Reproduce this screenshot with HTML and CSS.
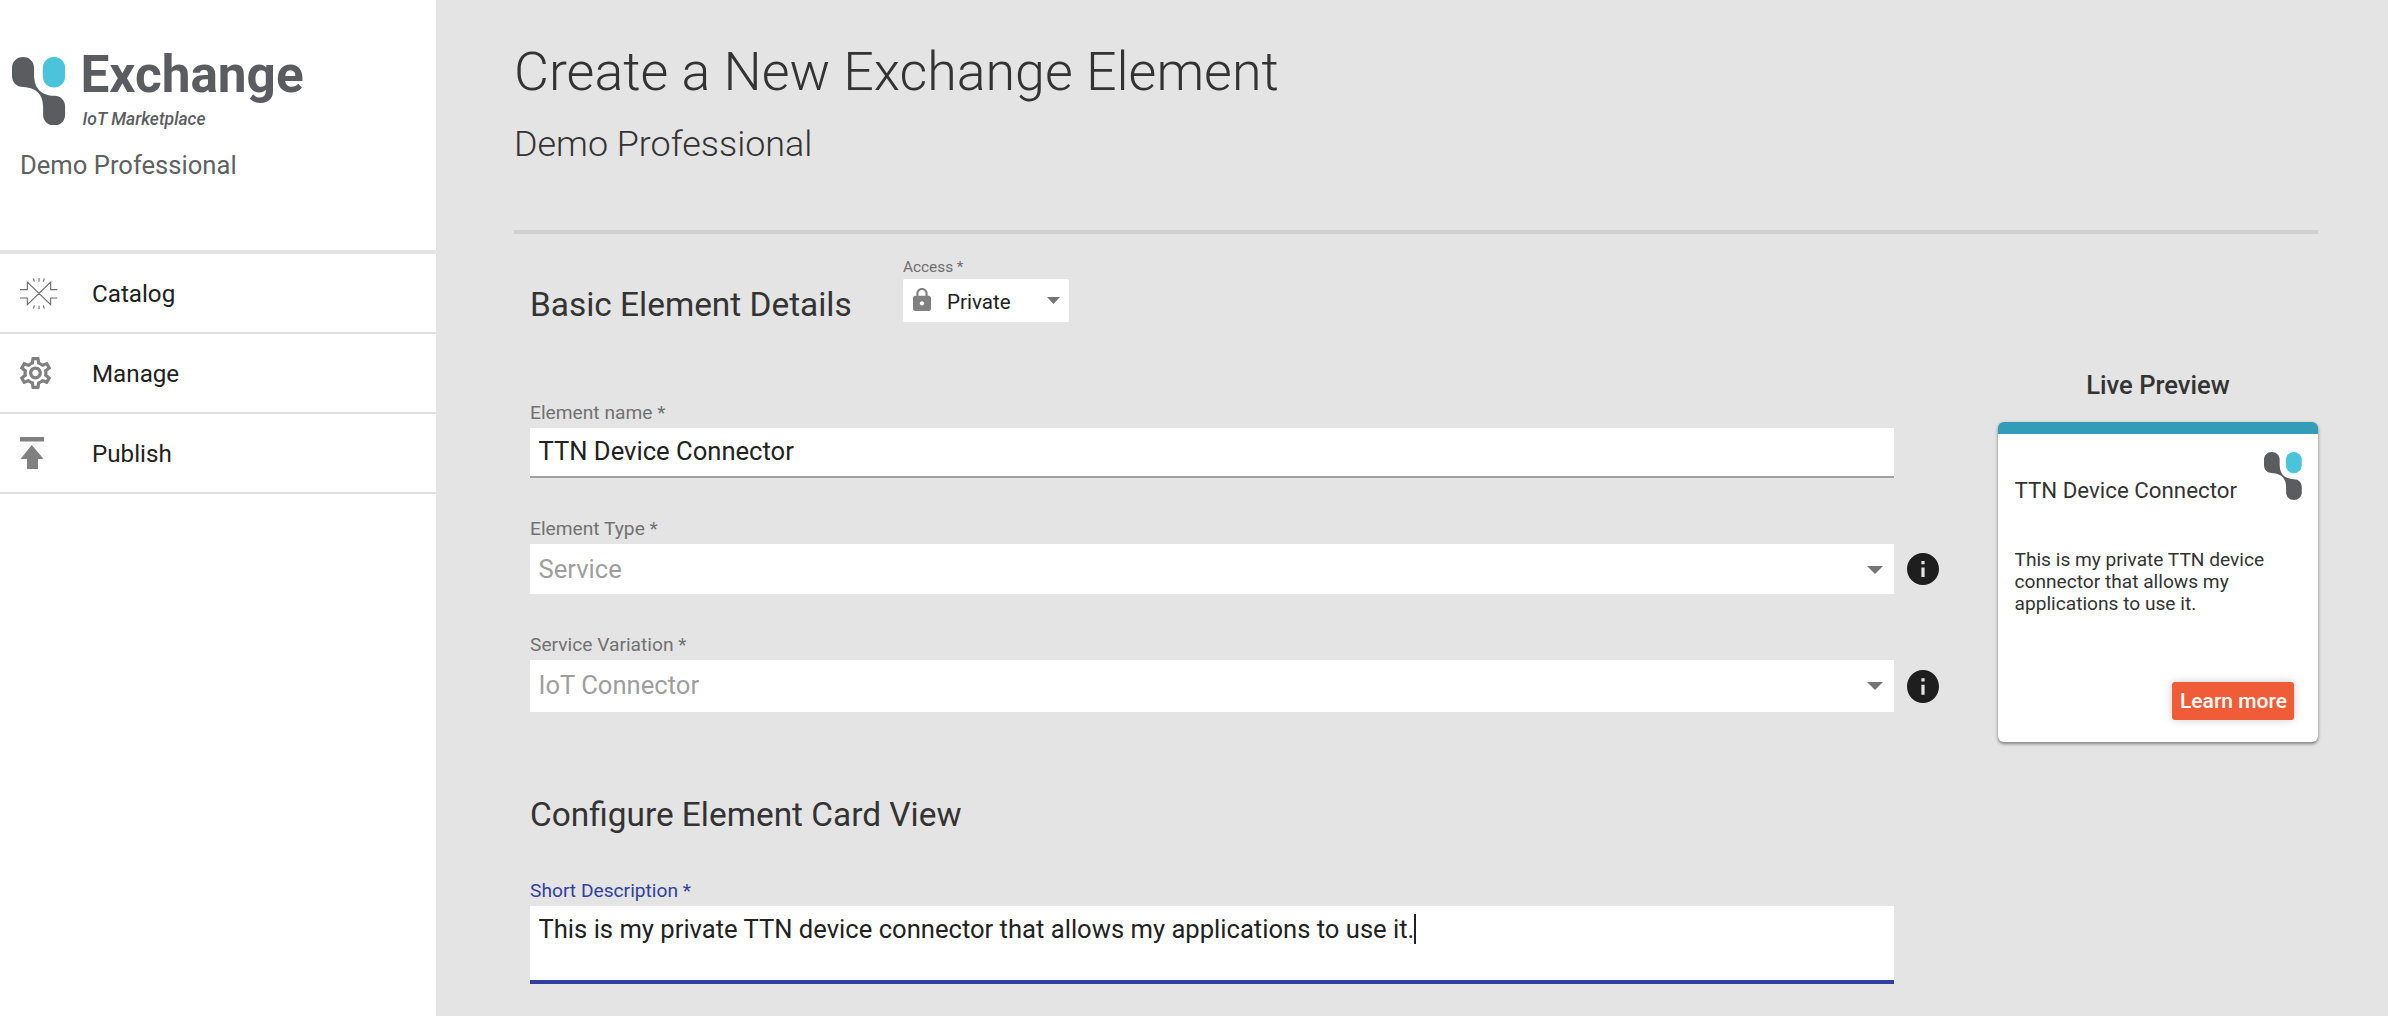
FILE: index.html
```html
<!DOCTYPE html>
<html lang="en">
<head>
<meta charset="utf-8">
<title>Exchange - Create a New Exchange Element</title>
<link rel="stylesheet" href="styles.css">
</head>
<body>
<svg class="defs" aria-hidden="true">
  <symbol id="logo" viewBox="0 0 160 205" preserveAspectRatio="none">
    <path fill="#5b5c5f" d="M33 0C52 0 66 14 66 33V52C66 85 79 114 126 116C146 116 159 130 159 149V172C159 191 145 205 126 205C107 205 93 191 93 172V150C93 120 80 92 33 90C14 90 0 76 0 57V33C0 14 14 0 33 0Z"/>
    <rect fill="#4bc3da" x="92" y="0" width="67" height="91" rx="33.5"/>
  </symbol>
  <symbol id="info" viewBox="2 2 20 20" preserveAspectRatio="none">
    <path fill="#1e1e1e" d="M12 2C6.48 2 2 6.48 2 12s4.48 10 10 10 10-4.48 10-10S17.52 2 12 2zm1 15h-2v-6h2v6zm0-8h-2V7h2v2z"/>
  </symbol>
  <symbol id="caret" viewBox="0 0 16 8" preserveAspectRatio="none">
    <path fill="#757575" d="M0 0H16L8 8Z"/>
  </symbol>
</svg>
<div class="app">
  <nav class="sidebar">
    <header class="brand">
      <div class="brand-row">
        <svg class="brand-logo"><use href="#logo"/></svg>
        <div class="brand-words">
          <div class="brand-name">Exchange</div>
          <div class="brand-tag">IoT Marketplace</div>
        </div>
      </div>
      <div class="account">Demo Professional</div>
    </header>
    <a class="nav-item">
      <span class="nav-icon">
        <svg width="38" height="33" viewBox="30 22 114 99" fill="none" stroke="#6c6c6c" stroke-width="3.3">
          <path d="M30 60H52V37L122 105V85H142M142 60H122V37L52 105V85H30M70 26L73 36M87 25V36M103 26L100 36M73 107L70 117M87 108V118M100 107L103 117"/>
        </svg>
      </span>
      <span class="nav-label">Catalog</span>
    </a>
    <a class="nav-item">
      <span class="nav-icon">
        <svg width="31" height="32" viewBox="2.3 2 19.4 20" fill="#808080">
          <path d="M19.43 12.98c.04-.32.07-.64.07-.98 0-.34-.03-.66-.07-.98l2.11-1.65c.19-.15.24-.42.12-.64l-2-3.46c-.09-.16-.26-.25-.44-.25-.06 0-.12.01-.17.03l-2.49 1c-.52-.4-1.08-.73-1.69-.98l-.38-2.65C14.46 2.18 14.25 2 14 2h-4c-.25 0-.46.18-.49.42l-.38 2.65c-.61.25-1.17.59-1.69.98l-2.49-1c-.06-.02-.12-.03-.18-.03-.17 0-.34.09-.43.25l-2 3.46c-.13.22-.07.49.12.64l2.11 1.65c-.04.32-.07.65-.07.98 0 .33.03.66.07.98l-2.11 1.65c-.19.15-.24.42-.12.64l2 3.46c.09.16.26.25.44.25.06 0 .12-.01.17-.03l2.49-1c.52.4 1.08.73 1.69.98l.38 2.65c.03.24.24.42.49.42h4c.25 0 .46-.18.49-.42l.38-2.65c.61-.25 1.17-.59 1.69-.98l2.49 1c.06.02.12.03.18.03.17 0 .34-.09.43-.25l2-3.46c.12-.22.07-.49-.12-.64l-2.11-1.65zm-1.98-1.71c.04.31.05.52.05.73 0 .21-.02.43-.05.73l-.14 1.13.89.7 1.08.84-.7 1.21-1.27-.51-1.04-.42-.9.68c-.43.32-.84.56-1.25.73l-1.06.43-.16 1.13-.2 1.35h-1.4l-.19-1.35-.16-1.13-1.06-.43c-.43-.18-.83-.41-1.23-.71l-.91-.7-1.06.43-1.27.51-.7-1.21 1.08-.84.89-.7-.14-1.13c-.03-.31-.05-.54-.05-.74s.02-.43.05-.73l.14-1.13-.89-.7-1.08-.84.7-1.21 1.27.51 1.04.42.9-.68c.43-.32.84-.56 1.25-.73l1.06-.43.16-1.13.2-1.35h1.39l.19 1.35.16 1.13 1.06.43c.43.18.83.41 1.23.71l.91.7 1.06-.43 1.27-.51.7 1.21-1.07.85-.89.7.14 1.13zM12 8c-2.21 0-4 1.79-4 4s1.79 4 4 4 4-1.79 4-4-1.79-4-4-4zm0 6c-1.1 0-2-.9-2-2s.9-2 2-2 2 .9 2 2-.9 2-2 2z"/>
        </svg>
      </span>
      <span class="nav-label">Manage</span>
    </a>
    <a class="nav-item">
      <span class="nav-icon">
        <svg width="24" height="32" viewBox="0 0 24 32" fill="#808080">
          <path d="M0 0H24V4.5H0ZM11.8 8L23.6 22H18V32H7V22H.5Z"/>
        </svg>
      </span>
      <span class="nav-label">Publish</span>
    </a>
  </nav>

  <main class="page">
    <header class="page-head">
      <h1 class="title">Create a New Exchange Element</h1>
      <p class="subtitle">Demo Professional</p>
    </header>
    <div class="columns">
      <form class="form">
        <div class="section-row">
          <h2 class="section">Basic Element Details</h2>
          <div class="access">
            <label class="access-label">Access *</label>
            <div class="access-box">
              <svg class="lock" viewBox="4 1 16 21" preserveAspectRatio="none"><path fill="#808080" d="M18 8h-1V6c0-2.76-2.24-5-5-5S7 3.240 7 6v2H6c-1.100 0-2 .9-2 2v10c0 1.100.9 2 2 2h12c1.100 0 2-.9 2-2V10c0-1.100-.9-2-2-2zm-6 9c-1.100 0-2-.9-2-2s.9-2 2-2 2 .9 2 2-.9 2-2 2zm3.100-9H8.900V6c0-1.710 1.390-3.100 3.100-3.100s3.100 1.390 3.100 3.100v2z"/></svg>
              <span class="access-value">Private</span>
              <svg class="caret-small"><use href="#caret"/></svg>
            </div>
          </div>
        </div>
        <div class="field">
          <label class="label">Element name *</label>
          <div class="box box-name">TTN Device Connector</div>
        </div>
        <div class="field">
          <label class="label">Element Type *</label>
          <div class="select-row">
            <div class="box box-type">Service<svg class="caret"><use href="#caret"/></svg></div>
            <svg class="info"><use href="#info"/></svg>
          </div>
        </div>
        <div class="field">
          <label class="label">Service Variation *</label>
          <div class="select-row">
            <div class="box box-variation">IoT Connector<svg class="caret"><use href="#caret"/></svg></div>
            <svg class="info info-tall"><use href="#info"/></svg>
          </div>
        </div>
        <h2 class="section section-card">Configure Element Card View</h2>
        <div class="field">
          <label class="label label-active">Short Description *</label>
          <div class="box box-desc">This is my private TTN device connector that allows my applications to use it.<span class="cursor"></span></div>
        </div>
      </form>
      <aside class="preview">
        <h3 class="preview-title">Live Preview</h3>
        <article class="card">
          <div class="card-head">
            <div class="card-title">TTN Device Connector</div>
            <svg class="card-logo"><use href="#logo"/></svg>
          </div>
          <p class="card-desc">This is my private TTN device connector that allows my applications to use it.</p>
          <button class="learn" type="button">Learn more</button>
        </article>
      </aside>
    </div>
  </main>
</div>
</body>
</html>
```
FILE: styles.css
```css
* { box-sizing: border-box; }
body {
  margin: 0;
  font-family: Roboto, "Liberation Sans", sans-serif;
  background: #e4e4e4;
  color: #333;
}
h1, h2, h3, p { margin: 0; font-weight: 400; }
svg { display: block; flex: none; }
.defs { position: absolute; width: 0; height: 0; }
.app { display: flex; height: 1016px; overflow: hidden; }

.sidebar { flex: none; width: 436px; background: #fff; }
.brand { height: 254px; border-bottom: 4px solid #e4e4e4; padding-top: 45px; }
.brand-row { display: flex; height: 104px; padding-left: 12px; }
.brand-logo { width: 53.500px; height: 68.500px; margin-top: 11.500px; }
.brand-words { padding-left: 15px; color: #5b5c5f; }
.brand-name { font-size: 51.300px; line-height: 60px; font-weight: 700; }
.brand-tag { font-size: 17.500px; line-height: 20px; margin: 4px 0 0 2px; font-style: italic; font-weight: 500; }
.account { padding-left: 20px; font-size: 25.600px; line-height: 32px; color: #5f6063; }
.nav-item {
  display: flex;
  align-items: center;
  height: 80px;
  padding-left: 20px;
  border-bottom: 2px solid #e0e0e0;
}
.nav-icon { width: 72px; }
.nav-label { font-size: 24.200px; line-height: 30px; padding-top: 1px; color: #212121; }

.page { flex: 1; padding: 40px 70px 0 78px; }
.page-head { height: 194px; border-bottom: 4px solid #d0d0d0; }
.title { font-size: 53.800px; line-height: 64px; font-weight: 300; }
.subtitle { margin-top: 16px; font-size: 35.900px; line-height: 48px; font-weight: 300; }
.columns { display: flex; justify-content: space-between; }

.form { width: 1425px; padding: 24px 0 0 16px; }
.section-row { display: flex; height: 142px; }
.section { font-size: 33.400px; line-height: 40px; }
.section-row .section { width: 373px; padding-top: 27px; }
.access { width: 166px; }
.access-label { display: block; height: 21px; font-size: 15.350px; line-height: 18px; color: #6e6e6e; }
.access-box { display: flex; align-items: center; height: 43px; padding: 0 9px 0 10px; background: #fff; border-radius: 2px; }
.lock { width: 18px; height: 23px; margin-top: -3px; }
.access-value { flex: 1; padding: 2px 0 0 16px; font-size: 20.600px; line-height: 24px; color: #212121; }
.caret-small { width: 13px; height: 7px; }

.field { height: 116px; }
.label { display: block; height: 28px; padding-top: 1px; font-size: 19.200px; line-height: 24px; color: #717171; }
.label-active { color: #303f9f; }
.select-row { display: flex; align-items: center; gap: 13px; }
.box { display: flex; width: 1364px; padding: 9px 11px 0 8.500px; background: #fff; font-size: 25.600px; line-height: 32px; color: #212121; }
.box-name { height: 50px; padding-top: 7px; border-bottom: 2px solid #a0a0a0; }
.box-type, .box-variation { height: 50px; justify-content: space-between; color: #9e9e9e; }
.box-variation { height: 52px; }
.caret { width: 16px; height: 8px; margin-top: 13px; }
.box-desc { height: 78px; padding-top: 7px; border-bottom: 4px solid #303f9f; }
.info { width: 32px; height: 32px; }
.info-tall { height: 33px; }
.section-card { height: 83px; margin-top: 47px; }
.cursor { width: 2px; height: 30px; margin-top: 1px; background: #212121; }

.preview { width: 320px; padding-top: 135px; }
.preview-title { font-size: 25.600px; line-height: 32px; font-weight: 500; text-align: center; }
.card {
  display: flex;
  flex-direction: column;
  height: 320px;
  margin-top: 21px;
  padding: 18px 16px 0 16.500px;
  background: #fff;
  border-top: 12px solid #339cb7;
  border-radius: 6px;
  box-shadow: 0 2px 3px rgba(0, 0, 0, .35), 0 1px 5px rgba(0, 0, 0, .15);
}
.card-head { display: flex; justify-content: space-between; height: 91px; }
.card-title { margin-top: 24px; font-size: 22.300px; line-height: 28px; white-space: nowrap; }
.card-logo { width: 38px; height: 48px; }
.card-desc { height: 66px; margin-top: 6px; font-size: 19.150px; line-height: 22px; }
.learn {
  width: 122px;
  height: 38px;
  margin: 67px 8px 0 auto;
  padding: 0 0 0 1px;
  border: 0;
  border-radius: 3px;
  background: #f05c38;
  color: #fff;
  font: 500 21px/38px Roboto, "Liberation Sans", sans-serif;
  box-shadow: 0 0 10px rgba(0, 0, 0, .2);
}
```
